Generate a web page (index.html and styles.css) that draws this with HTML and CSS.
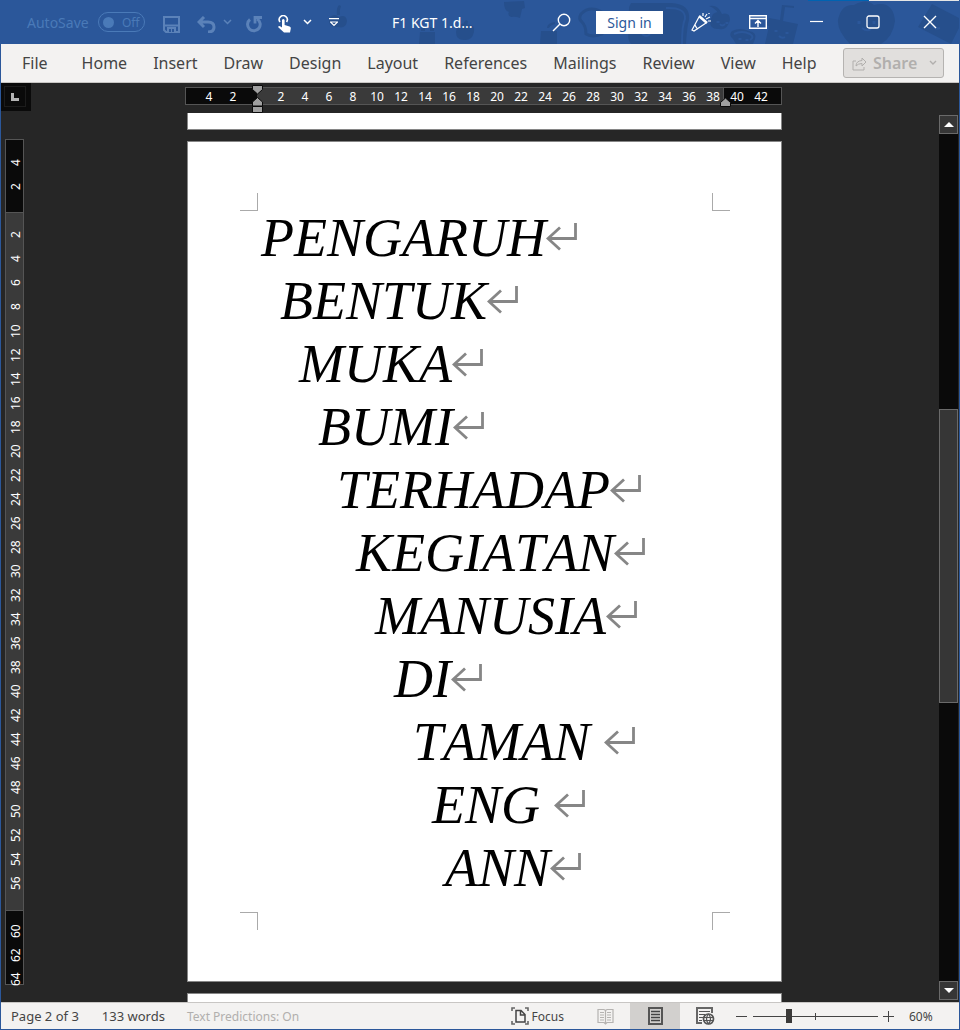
FILE: index.html
```html
<!DOCTYPE html>
<html lang="en">
<head>
<meta charset="utf-8">
<title>F1 KGT 1.docx</title>
<link rel="stylesheet" href="styles.css">
</head>
<body>
<div class="app">
  <header class="titlebar">
    <svg class="decor" viewBox="0 0 960 44" width="960" height="44" aria-hidden="true">
      <g fill="#264f8c">
        <path d="M330 17q5-4 9 0q7-3 8 4q-1 8-9 6q-8 1-9-5zM337 15q-1-7 2-10l2 1q-2 4-1 9z"/>
        <path d="M504 2l20-1 1 7-3 1-2 9q-5-2-9-1-4-2-2-5-5-1-5-10z"/>
        <path d="M420 32h15v12h-16zM421 27h4v4h-4zM430 27h4v4h-4z"/>
        <path d="M457 27q6-6 10-2 8-2 7 7-2 9-10 8-8 0-8-8zM464 26q-1-4 2-6l2 1-1 6z"/>
        <path d="M541 31h16v13h-17zM547 28q0-5 8-6v2q-5 1-6 4z"/>
        <path d="M631 3h40q20 1 18 17-2 6-3 24h-55q-6-7 1-20-6-14-1-21z"/>
        <path d="M713 14q6-4 9 0 8-2 8 6-3 11-11 9-9 1-9-8zM719 14q-4-6-10-8 9-2 13 8z"/>
        <path d="M732 31q8-4 17 0 8 1 6 8l-2 5h-17l-3-5q-5-4-1-8z"/>
        <path d="M769 18l11 2 2-15 12 1v2l-9-1-2 14 15 3-2 8-3 12h-28l4-18-3-1z"/>
        <path d="M854 5q12-7 20 0 19-5 21 16-2 16-14 23h-31q-13-13-12-24 3-16 16-15z"/>
        <path d="M932 4l27 14v10l-8 16-33-17z"/>
      </g>
      <path d="M581 14q8-8 19-3 9 4 4 11l-2 12q-9 4-16 0 0-8-4-12-4-3-1-8z" fill="none" stroke="#264f8c" stroke-width="3"/>
      <path d="M666 8q20-1 19 11-3 6-3 25M734 34q8-4 16 0 5 3 0 6" fill="none" stroke="#2b579a" stroke-width="2"/>
      <path d="M639 26v3M652 29v3M590 19v2M599 21v2M859 21v3M874 21v3M776 30v2M787 32v2M718 21v2M727 22v2M740 38v2M747 39v2" stroke="#2b579a" stroke-width="3"/>
      <path d="M642 34q5 4 8 0M592 26q3 3 5 0M862 28q5 4 9 1M779 36q3 3 6 1M720 24q2 3 5 0M932 24q2 6 8 4" fill="none" stroke="#2b579a" stroke-width="2"/>
      <path d="M808 0h61v1h-61z" fill="#0063b1"/><path d="M869 0h91v1h-91z" fill="#e6e6e6"/>
    </svg>
    <div class="quick">
      <label class="autosave" for="autosave">AutoSave</label>
      <button class="toggle" id="autosave" type="button" role="switch" aria-checked="false"><span class="knob"></span>Off</button>
      <button class="tool save dim" type="button" aria-label="Save"><svg width="17" height="17" viewBox="0 0 17 17"><path d="M1 1h15v15H3l-2-2z" fill="none" stroke="currentColor" stroke-width="2"/><path d="M1 9.500h15" stroke="currentColor" stroke-width="2"/><path d="M4 11h9v5H4z" fill="currentColor"/><path d="M6 13h2v3H6zM9 13h2v3H9z" fill="#2b579a"/></svg></button>
      <button class="tool undo dim" type="button" aria-label="Undo"><svg width="19" height="17" viewBox="0 0 19 17"><path d="M7 1L2 6l5 5M2 6h9q6 0 6 5t-6 5" fill="none" stroke="currentColor" stroke-width="3"/></svg></button>
      <button class="tool more dim" type="button" aria-label="Undo options"><svg width="9" height="6" viewBox="0 0 9 6"><path d="M1 1l3.500 3.500L8 1" fill="none" stroke="currentColor" stroke-width="1.500"/></svg></button>
      <button class="tool redo dim" type="button" aria-label="Repeat"><svg width="18" height="17" viewBox="0 0 18 17"><path d="M5 3.500a6.300 6.300 0 1 0 7-.5" fill="none" stroke="currentColor" stroke-width="3"/><path d="M10 7.500V1.500h7" fill="none" stroke="currentColor" stroke-width="2.800"/></svg></button>
      <button class="tool touch" type="button" aria-label="Touch mode"><svg width="14" height="18" viewBox="0 0 14 18"><path d="M2 7a4 4 0 1 1 6.500 0" fill="none" stroke="currentColor" stroke-width="1.600"/><path d="M4 5q1.300-2 2.600 0v5l5 1.500q1.400.5 1.200 2L12 17.500H6L0 12q1-1.500 2.500-.5L4 12.500z" fill="currentColor"/></svg></button>
      <button class="tool more" type="button" aria-label="Touch options"><svg width="9" height="6" viewBox="0 0 9 6"><path d="M1 1l3.500 3.500L8 1" fill="none" stroke="currentColor" stroke-width="1.500"/></svg></button>
      <button class="tool custom" type="button" aria-label="Customize toolbar"><svg width="10" height="9" viewBox="0 0 10 9"><path d="M0 .6h10M1 4h8M1.500 4L5 7.500 8.500 4" fill="none" stroke="currentColor" stroke-width="1.100"/></svg></button>
    </div>
    <div class="doc-title">F1 KGT 1.d...</div>
    <div class="actions">
      <button class="tool search" type="button" aria-label="Search"><svg width="19" height="19" viewBox="0 0 19 19"><circle cx="12" cy="7" r="5.700" fill="none" stroke="currentColor" stroke-width="1.400"/><path d="M8 11l-7 7" stroke="currentColor" stroke-width="1.500"/></svg></button>
      <button class="signin" type="button">Sign in</button>
      <button class="tool news" type="button" aria-label="What's new"><svg width="21" height="20" viewBox="0 0 21 20"><path d="M8 5L1 18l2 1 12-8M4 13q2 4 3 4" fill="none" stroke="currentColor" stroke-width="1.200"/><path d="M8 4l8 7" stroke="currentColor" stroke-width="2.500"/><path d="M12 1v3M14 5l2-3M15 7l4-2M17 9h3M18 1v1" stroke="currentColor" stroke-width="1.200"/></svg></button>
      <button class="tool ribbon" type="button" aria-label="Ribbon display options"><svg width="18" height="14" viewBox="0 0 18 14"><path d="M.7.7h16.600v12.600H.7zM1 3.500h16M9 12V6M6 8.500l3-3 3 3" fill="none" stroke="currentColor" stroke-width="1.400"/></svg></button>
      <button class="tool window" type="button" aria-label="Minimize"><svg width="14" height="14" viewBox="0 0 14 14"><path d="M1 6.500h13" stroke="currentColor" stroke-width="1.200"/></svg></button>
      <button class="tool window" type="button" aria-label="Maximize"><svg width="14" height="14" viewBox="0 0 14 14"><rect x="1" y="1" width="12" height="12" rx="2" fill="none" stroke="currentColor" stroke-width="1.300"/></svg></button>
      <button class="tool window" type="button" aria-label="Close"><svg width="14" height="14" viewBox="0 0 14 14"><path d="M1 1l12 12M13 1L1 13" stroke="currentColor" stroke-width="1.400"/></svg></button>
    </div>
  </header>

  <nav class="tabs">
    <button class="tab file" type="button">File</button>
    <button class="tab" type="button">Home</button>
    <button class="tab" type="button">Insert</button>
    <button class="tab" type="button">Draw</button>
    <button class="tab" type="button">Design</button>
    <button class="tab" type="button">Layout</button>
    <button class="tab" type="button">References</button>
    <button class="tab" type="button">Mailings</button>
    <button class="tab" type="button">Review</button>
    <button class="tab" type="button">View</button>
    <button class="tab" type="button">Help</button>
    <button class="share" type="button" disabled>
      <svg width="15" height="15" viewBox="0 0 15 15"><path d="M4 5H1v9h11v-3M4 10q0-5 6-5.500V2l4 4-4 4V7.500Q6 7.500 4 10z" fill="none" stroke="currentColor"/></svg>
      <span>Share</span>
      <svg class="caret" width="8" height="6" viewBox="0 0 8 6"><path d="M1 1l3 3 3-3" fill="none" stroke="currentColor" stroke-width="1.400"/></svg>
    </button>
  </nav>

  <main class="workspace">
    <div class="left">
      <button class="tabstop" type="button" aria-label="Tab stop"><span class="tabstop-face"><svg width="8" height="8" viewBox="0 0 8 8"><path d="M1.500 0v6.500H8" fill="none" stroke="#b4b4b4" stroke-width="3"/></svg></span></button>
      <div class="vruler">
        <span>4</span><span>2</span><span></span><span>2</span><span>4</span><span>6</span><span>8</span><span>10</span><span>12</span><span>14</span><span>16</span><span>18</span><span>20</span><span>22</span><span>24</span><span>26</span><span>28</span><span>30</span><span>32</span><span>34</span><span>36</span><span>38</span><span>40</span><span>42</span><span>44</span><span>46</span><span>48</span><span>50</span><span>52</span><span>54</span><span>56</span><span></span><span>60</span><span>62</span><span>64</span>
      </div>
    </div>
    <div class="center">
      <div class="hruler">
        <span>4</span><span>2</span><span></span><span>2</span><span>4</span><span>6</span><span>8</span><span>10</span><span>12</span><span>14</span><span>16</span><span>18</span><span>20</span><span>22</span><span>24</span><span>26</span><span>28</span><span>30</span><span>32</span><span>34</span><span>36</span><span>38</span><span>40</span><span>42</span>
        <svg class="indent-left" width="11" height="28" viewBox="0 0 11 28"><path d="M.5.5h10v4l-5 4.500-5-4.500zM.5 21v-4l5-4.500 5 4.500v4zM.5 21.500h10v6H.5z" fill="#a0a0a0" stroke="#0a0a0a"/></svg>
        <svg class="indent-right" width="11" height="10" viewBox="0 0 11 10"><path d="M.5 9.500v-4l5-4.500 5 4.500v4z" fill="#a0a0a0" stroke="#0a0a0a"/></svg>
      </div>
      <div class="pages">
        <div class="sheet previous"></div>
        <article class="sheet current">
          <div class="marks top"><i></i><i></i></div>
          <div class="text">
            <p class="line l0">PENGARUH<svg class="ret"><use href="#return"/></svg></p>
            <p class="line l1">BENTUK<svg class="ret"><use href="#return"/></svg></p>
            <p class="line l2">MUKA<svg class="ret"><use href="#return"/></svg></p>
            <p class="line l3">BUMI<svg class="ret"><use href="#return"/></svg></p>
            <p class="line l4">TERHADAP<svg class="ret"><use href="#return"/></svg></p>
            <p class="line l5">KEGIATAN<svg class="ret"><use href="#return"/></svg></p>
            <p class="line l6">MANUSIA<svg class="ret"><use href="#return"/></svg></p>
            <p class="line l7">DI<svg class="ret"><use href="#return"/></svg></p>
            <p class="line l8">TAMAN <svg class="ret"><use href="#return"/></svg></p>
            <p class="line l9">ENG <svg class="ret"><use href="#return"/></svg></p>
            <p class="line l10">ANN<svg class="ret"><use href="#return"/></svg></p>
          </div>
          <div class="marks bottom"><i></i><i></i></div>
        </article>
        <div class="sheet next"></div>
      </div>
    </div>
    <div class="scrollbar">
      <button class="arrow" type="button" aria-label="Scroll up"><svg width="10" height="5" viewBox="0 0 10 5"><path d="M0 5l5-5 5 5z" fill="#fff"/></svg></button>
      <div class="track"><div class="thumb"></div></div>
      <button class="arrow" type="button" aria-label="Scroll down"><svg width="10" height="5" viewBox="0 0 10 5"><path d="M0 0l5 5 5-5z" fill="#fff"/></svg></button>
    </div>
  </main>

  <footer class="status">
    <span class="pageno">Page 2 of 3</span>
    <span class="words">133 words</span>
    <span class="predict">Text Predictions: On</span>
    <div class="views">
      <button class="focus" type="button"><svg width="18" height="18" viewBox="0 0 18 18"><path d="M4 1H1v3M14 1h3v3M1 14v3h3M17 14v3h-3" fill="none" stroke="#666" stroke-width="1.600"/><path d="M5 3.500h5l4 4V15H5zM9.500 4v4H14" fill="none" stroke="#444" stroke-width="1.500"/></svg>Focus</button>
      <button class="view" type="button" aria-label="Read mode"><svg width="17" height="17" viewBox="0 0 17 17"><path d="M1 1.500h6l1.500 1 1.500-1h6v13h-6l-1.500 1.500L7 14.500H1zM8.500 3v12M3 4.500h4M3 7h4M3 9.500h4M3 12h4M10 4.500h4M10 7h4M10 9.500h4M10 12h4" fill="none" stroke="#b5b3b1" stroke-width="1.200"/></svg></button>
      <button class="view selected" type="button" aria-label="Print layout"><svg width="15" height="18" viewBox="0 0 15 18"><path d="M1 1h13v16H1z" fill="none" stroke="#555" stroke-width="2"/><path d="M3 4.500h9M3 7.500h9M3 10.500h9M3 13.500h9" stroke="#444" stroke-width="1.300"/></svg></button>
      <button class="view" type="button" aria-label="Web layout"><svg width="19" height="18" viewBox="0 0 19 18"><path d="M6 16H1V1h15v5" fill="none" stroke="#666" stroke-width="2"/><path d="M3 4.500h11M3 7.500h6M3 10.500h4M3 13.500h3" stroke="#555" stroke-width="1.200"/><circle cx="12.500" cy="12" r="5" fill="#f3f2f1" stroke="#555" stroke-width="1.700"/><path d="M8 10.500h9M8 13.500h9M12.500 7q-4 5 0 10M12.500 7q4 5 0 10" fill="none" stroke="#555" stroke-width="1.200"/></svg></button>
      <button class="zoom minus" type="button" aria-label="Zoom out"><svg width="11" height="11" viewBox="0 0 11 11"><path d="M0 5.500h11" stroke="#444"/></svg></button>
      <input class="slider" type="range" min="0" max="100" value="28" aria-label="Zoom">
      <button class="zoom" type="button" aria-label="Zoom in"><svg width="11" height="11" viewBox="0 0 11 11"><path d="M0 5.500h11M5.500 0v11" stroke="#444"/></svg></button>
      <span class="percent">60%</span>
    </div>
  </footer>
</div>
<svg class="defs" width="0" height="0" aria-hidden="true"><symbol id="return" viewBox="0 0 31 28"><path d="M14 4.500L2 15.500l12 11M2 15.500h27.500V0" fill="none" stroke="#868686" stroke-width="2.800"/></symbol></svg>
</body>
</html>
```
FILE: styles.css
```css
* { box-sizing: border-box; }
body { margin: 0; font-family: "Noto Sans", "Open Sans", sans-serif; overflow: hidden; }
button { font: inherit; color: inherit; background: none; border: 0; padding: 0; }
svg { display: block; flex: none; }
.defs { position: absolute; }

.app {
  display: flex;
  flex-direction: column;
  height: 100vh;
  background: #262626;
  border: 1px solid #2b579a;
  border-top: 0;
}

/* Title bar */
.titlebar {
  position: relative;
  display: flex;
  align-items: center;
  flex: none;
  height: 44px;
  background: #2b579a;
  color: #fff;
  overflow: hidden;
}
.decor { position: absolute; top: 0; right: -1px; }
.quick, .actions, .doc-title { position: relative; }
.quick { display: flex; align-items: center; padding-left: 26px; }
.autosave { font-size: 14px; color: #4a7ab8; width: 71px; }
.toggle {
  display: flex;
  align-items: center;
  gap: 8px;
  width: 47px;
  height: 20px;
  padding-left: 4px;
  border: 1px solid #4a7ab8;
  border-radius: 10px;
  font-size: 12px;
  color: #4a7ab8;
}
.knob { width: 11px; height: 11px; border-radius: 50%; background: #4a7ab8; }
.tool { display: flex; align-items: center; justify-content: center; height: 32px; }
.dim { color: #5b82b9; }
.save { margin-left: 18px; padding-top: 4px; }
.undo { margin-left: 17px; padding-top: 4px; }
.more { margin-left: 7px; }
.redo { margin-left: 13px; padding-top: 4px; }
.touch { margin-left: 15px; padding-top: 3px; }
.touch + .more { margin-left: 11px; }
.custom { margin-left: 17px; }
.doc-title { margin-left: 53px; font-size: 14px; white-space: nowrap; }
.actions { display: flex; align-items: center; margin-left: auto; padding-right: 22px; }
.search { margin-right: 25px; }
.signin { width: 67px; height: 23px; background: #fff; color: #2b579a; font-size: 14px; line-height: 23px; }
.news { margin-left: 28px; }
.ribbon { margin-left: 37px; margin-right: 42px; }
.window + .window { margin-left: 43px; }

/* Ribbon tabs */
.tabs {
  display: flex;
  align-items: center;
  flex: none;
  gap: 26px;
  height: 39px;
  padding: 0 15px 0 21px;
  background: #f3f2f1;
  border-bottom: 1px solid #c8c6c4;
  color: #444;
}
.tab { font-size: 16px; line-height: 24px; }
.file { margin-right: 8px; }
.share {
  display: flex;
  align-items: center;
  flex: none;
  gap: 6px;
  width: 101px;
  height: 30px;
  margin-left: auto;
  padding: 0 6px 0 8px;
  border: 1px solid #b5b3b1;
  border-radius: 3px;
  background: #e1dfdd;
  color: #b1afad;
  font-size: 16px;
  font-weight: 600;
}
.caret { margin-left: auto; }

/* Document area */
.workspace {
  display: grid;
  grid-template-columns: 30px minmax(0, 1fr) 21px;
  flex: 1;
  min-height: 0;
  overflow: hidden;
}
.left, .center { display: flex; flex-direction: column; min-height: 0; }
.tabstop { width: 30px; height: 28px; flex: none; padding: 3px 5px 4px 3px; background: #0a0a0a; }
.tabstop-face { display: flex; align-items: center; justify-content: center; height: 21px; border: 1px solid #1c1c1c; }
.hruler, .vruler { display: flex; border: 1px solid #555; color: #fff; font-size: 12px; line-height: 17px; }
.vruler {
  flex: 1;
  flex-direction: column;
  width: 19px;
  min-height: 0;
  margin: 28px 0 17px 4px;
  padding-top: 11px;
  background: linear-gradient(#0a0a0a 72px, #555 72px, #555 73px, #3a3a3a 73px, #3a3a3a 770px, #555 770px, #555 771px, #0a0a0a 771px);
}
.vruler span { flex: none; height: 24px; width: 17px; line-height: 19px; text-align: center; writing-mode: vertical-rl; transform: rotate(180deg); }
.center { align-items: center; }
.hruler {
  position: relative;
  flex: none;
  width: 597px;
  height: 18px;
  margin: 4px 2px 8px 0;
  padding-left: 11px;
  background: linear-gradient(90deg, #0a0a0a 71px, #3a3a3a 71px, #3a3a3a 537px, #555 537px, #555 538px, #0a0a0a 538px);
}
.hruler span { width: 24px; text-align: center; }
.indent-left { position: absolute; left: 66px; top: -3px; }
.indent-right { position: absolute; left: 534px; top: 9px; }
.pages { display: flex; flex-direction: column; gap: 11px; width: 595px; min-height: 0; overflow: hidden; }
.sheet { flex: none; background: #fff; border: 1px solid #868686; }
.previous { height: 17px; border-top: 0; }
.next { height: 841px; }
.current { padding: 51px 51px 51px 52px; }
.marks { display: flex; justify-content: space-between; }
.marks i { width: 18px; height: 18px; border: 0 solid #aaa; }
.top i { border-bottom-width: 1px; }
.bottom i { border-top-width: 1px; }
.marks i:first-child { border-right-width: 1px; }
.marks i:last-child { border-left-width: 1px; }
.text {
  margin-top: -4px;
  padding: 0 0 12px 21px;
  color: #000;
  font: italic 54px/63px "Liberation Serif", serif;
  font-kerning: none;
}
.line { display: flex; align-items: flex-start; margin: 0; white-space: pre; }
.ret { width: 31px; height: 28px; margin-top: 16px; }
.l1 { padding-left: 19px; }
.l2 { padding-left: 38px; }
.l3 { padding-left: 57px; }
.l4 { padding-left: 76px; }
.l5 { padding-left: 95px; }
.l6 { padding-left: 114px; }
.l7 { padding-left: 133px; }
.l8 { padding-left: 152px; }
.l9 { padding-left: 171px; }
.l10 { padding-left: 184px; }

.scrollbar { display: flex; flex-direction: column; margin: 32px 1px 2px; background: #0a0a0a; }
.arrow { display: flex; align-items: center; justify-content: center; flex: none; height: 19px; border: 1px solid #6a6a6a; background: #363636; }
.track { display: flex; flex-direction: column; flex: 1; }
.track::before { content: ""; flex: 276; }
.track::after { content: ""; flex: 279; }
.thumb { flex: 292; border: 1px solid #6a6a6a; background: #363636; }

/* Status bar */
.status {
  display: flex;
  align-items: center;
  flex: none;
  height: 27px;
  padding-left: 10px;
  background: #f3f2f1;
  border-top: 1px solid #c8c6c4;
  color: #444;
  font-size: 12px;
  white-space: nowrap;
}
.pageno, .words { font-size: 13px; }
.words { margin-left: 23px; }
.predict { margin-left: 22px; color: #b1afad; }
.views { display: flex; align-items: center; align-self: stretch; margin-left: auto; padding-right: 24px; }
.focus { display: flex; align-items: center; gap: 3px; margin-right: 16px; }
.view { display: flex; align-items: center; justify-content: center; align-self: stretch; width: 50px; }
.selected { background: #d2d0ce; }
.zoom { display: flex; }
.minus { margin-left: 6px; }
.slider {
  appearance: none;
  width: 125px;
  height: 14px;
  margin: 0 5px 0 6px;
  background:
    linear-gradient(#444, #444) 62px 4px / 1px 7px no-repeat,
    linear-gradient(#444, #444) 0 7px / 100% 1px no-repeat;
}
.slider::-webkit-slider-thumb { appearance: none; width: 6px; height: 14px; background: #3b3a39; }
.percent { width: 26px; margin-left: 15px; }
```
